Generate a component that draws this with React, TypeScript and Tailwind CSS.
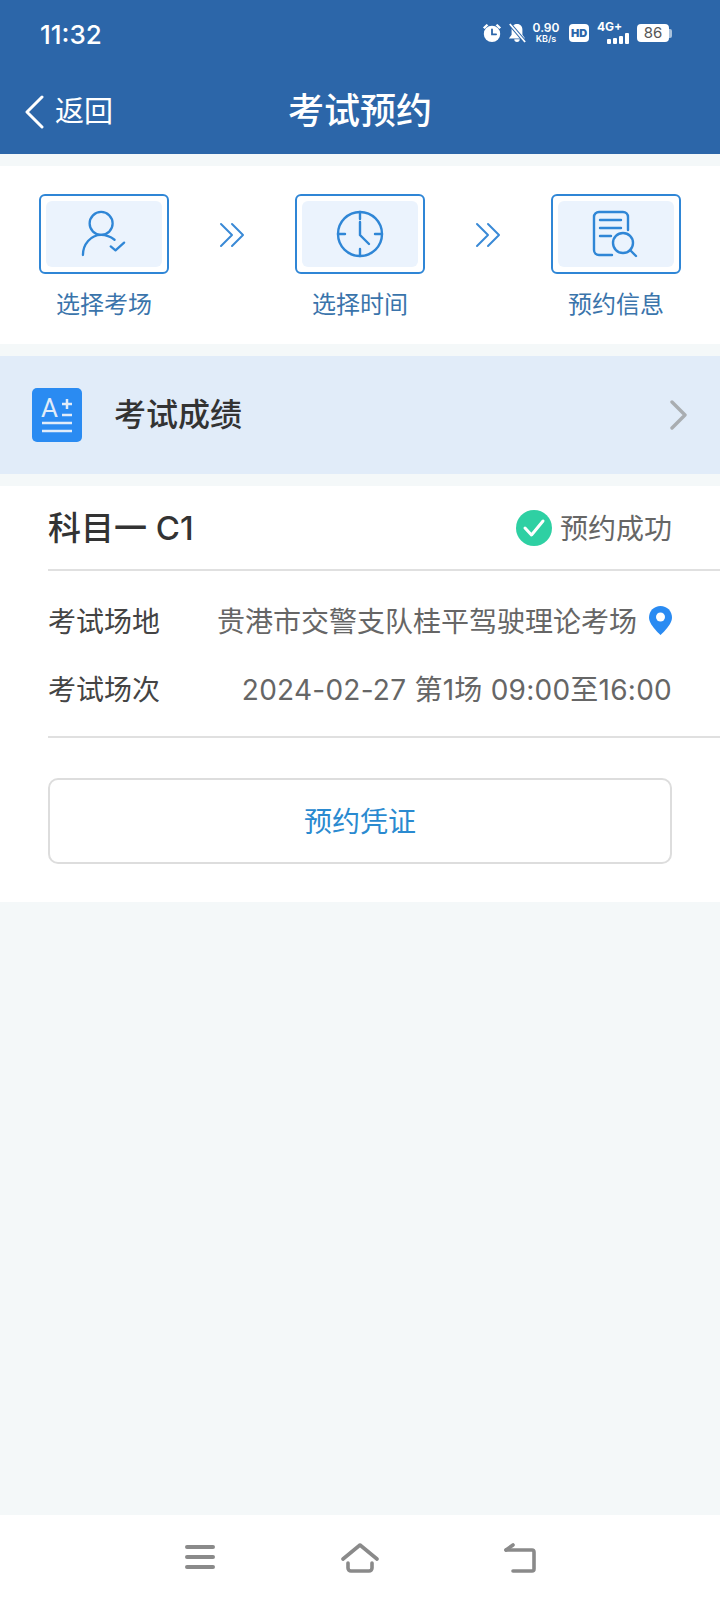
import type { ReactNode } from 'react';

const font = { fontFamily: 'Inter, "Noto Sans CJK SC", sans-serif' };

function UserIcon() {
  return (
    <svg width="46" height="48" viewBox="0 0 48 48" fill="none" stroke="#2f86d6" strokeWidth="2.4" strokeLinecap="round" strokeLinejoin="round">
      <circle cx="21" cy="13" r="12" />
      <path d="M2 46c0-11 8-21 19-21 5 0 10 2 14 5" />
      <path d="M31 37l5 4 9-8" />
    </svg>
  );
}

function ClockIcon() {
  return (
    <svg width="48" height="48" viewBox="0 0 48 48" fill="none" stroke="#2f86d6" strokeWidth="2.4" strokeLinecap="round">
      <circle cx="24" cy="24" r="22" />
      <path d="M24 2v7M24 39v7M2 24h7M39 24h7" />
      <path d="M24 12v13l9 9" />
    </svg>
  );
}

function DocIcon() {
  return (
    <svg width="48" height="48" viewBox="0 0 48 48" fill="none" stroke="#2f86d6" strokeWidth="2.4" strokeLinecap="round">
      <path d="M20 45H7a5 5 0 0 1-5-5V7a5 5 0 0 1 5-5h24a5 5 0 0 1 5 5v13" />
      <path d="M8 10h21M8 18h21M8 26h11" />
      <circle cx="31" cy="33" r="10" />
      <path d="M38 40l6 6" />
    </svg>
  );
}

function Step({ label, children }: { label: string; children: ReactNode }) {
  return (
    <div className="w-[130px] flex flex-col items-center">
      <div className="w-[130px] h-[80px] border-2 border-[#2f86d6] rounded-[6px] p-[5px] bg-white">
        <div className="w-full h-full rounded-[6px] bg-[#ebf3fd] flex items-center justify-center">{children}</div>
      </div>
      <span className="mt-[13px] text-[24px] leading-[36px] text-[#3a74ab]">{label}</span>
    </div>
  );
}

function Chevrons() {
  return (
    <svg className="mt-[28px]" width="26" height="26" viewBox="0 0 26 26" fill="none" stroke="#3a8ad6" strokeWidth="2" strokeLinecap="round" strokeLinejoin="round">
      <path d="M2 2l11 11L2 24" />
      <path d="M13 2l11 11-11 11" />
    </svg>
  );
}

export default function App() {
  return (
    <div className="w-[720px] h-[1600px] bg-[#f4f8f9] flex flex-col" style={font}>
      {/* header */}
      <div className="h-[154px] shrink-0 bg-[#2c66a9] text-white">
        <div className="h-[68px] flex items-center pl-[40px] pr-[48px] justify-between">
          <span className="text-[26px] font-medium">11:32</span>
          <div className="flex items-center gap-[6px] -mt-[2px]">
            <svg width="20" height="20" viewBox="0 0 22 22" fill="white">
              <circle cx="11" cy="12" r="9" />
              <path d="M1 5l4-4 2 1.5-4 4zM21 5l-4-4-2 1.5 4 4z" />
              <path d="M11 7v5.5h4.5" fill="none" stroke="#2c66a9" strokeWidth="2" strokeLinecap="round" />
            </svg>
            <svg width="18" height="20" viewBox="0 0 20 22" fill="white">
              <path d="M10 1c4 0 6 3 6 6v6l3 4H1l3-4V7c0-3 2-6 6-6z" />
              <path d="M7 18a3 3 0 0 0 6 0z" />
              <path d="M2 1l17 20" stroke="#2c66a9" strokeWidth="4" />
              <path d="M2 1l17 20" stroke="white" strokeWidth="2" />
            </svg>
            <div className="flex flex-col items-center w-[28px] font-semibold leading-none">
              <span className="text-[12px] leading-[12px]">0.90</span>
              <span className="text-[9px] leading-[10px]">KB/s</span>
            </div>
            <span className="ml-[3px] w-[20px] h-[18px] rounded-[4px] bg-white text-[#2c66a9] text-[11px] font-black leading-[18px] text-center">HD</span>
            <div className="relative w-[32px] h-[22px] ml-[2px]">
              <span className="absolute left-0 top-[-2px] text-[12px] font-bold leading-[14px]">4G+</span>
              <div className="absolute right-0 bottom-0 flex items-end gap-[2px]">
                <i className="block w-[4px] h-[5px] bg-white rounded-[1px]" />
                <i className="block w-[4px] h-[6px] bg-white rounded-[1px]" />
                <i className="block w-[4px] h-[8px] bg-white rounded-[1px]" />
                <i className="block w-[4px] h-[11px] bg-white rounded-[1px]" />
              </div>
            </div>
            <div className="flex items-center ml-[2px]">
              <span className="w-[32px] h-[18px] rounded-[4px] bg-white text-[#555] text-[15px] leading-[18px] text-center">86</span>
              <i className="block w-[3px] h-[9px] bg-white/60 rounded-r-[2px]" />
            </div>
          </div>
        </div>
        <div className="relative h-[86px] flex items-center justify-center">
          <span className="text-[36px] font-medium">考试预约</span>
          <div className="absolute left-[24px] top-[21px] flex items-center gap-[11px]">
            <svg width="20" height="34" viewBox="0 0 20 34" fill="none" stroke="white" strokeWidth="3" strokeLinecap="round" strokeLinejoin="round">
              <path d="M18 2L3 17l15 15" />
            </svg>
            <span className="text-[29px] leading-[44px] pt-[1px]">返回</span>
          </div>
        </div>
      </div>

      {/* steps */}
      <div className="mt-[12px] h-[178px] bg-white px-[39px] pt-[28px] flex items-start justify-between">
        <Step label="选择考场"><UserIcon /></Step>
        <Chevrons />
        <Step label="选择时间"><ClockIcon /></Step>
        <Chevrons />
        <Step label="预约信息"><DocIcon /></Step>
      </div>

      {/* score row */}
      <div className="mt-[12px] h-[118px] bg-[#e1ecf9] flex items-center pl-[32px] pr-[32px]">
        <svg width="50" height="54" viewBox="0 0 50 54">
          <rect width="50" height="54" rx="5" fill="#2a8bf2" />
          <text x="9" y="29" fontSize="26" fill="#e1ecf9" fontFamily="Roboto, sans-serif">A</text>
          <path d="M30 16h10M35 11v10M30 27h10M10 35h30M10 43h30" stroke="#e1ecf9" strokeWidth="2.5" />
        </svg>
        <span className="ml-[32px] text-[32px] font-medium text-[#333]">考试成绩</span>
        <svg className="ml-auto" width="18" height="30" viewBox="0 0 18 30" fill="none" stroke="#a9adb1" strokeWidth="3.4" strokeLinecap="round" strokeLinejoin="round">
          <path d="M2 2l13 13L2 28" />
        </svg>
      </div>

      {/* exam card */}
      <div className="mt-[12px] h-[416px] bg-white pl-[48px]">
        <div className="h-[85px] pt-[3px] flex items-center justify-between pr-[48px] border-b-2 border-[#e0e0e0]">
          <span className="text-[33px] font-medium text-[#333]">科目一 C1</span>
          <div className="flex items-center gap-[8px]">
            <svg className="-mt-[2px]" width="36" height="36" viewBox="0 0 36 36">
              <circle cx="18" cy="18" r="18" fill="#2ed0a3" />
              <path d="M9 18l6.5 7L27 11" fill="none" stroke="white" strokeWidth="3" strokeLinecap="round" strokeLinejoin="round" />
            </svg>
            <span className="text-[28px] text-[#666]">预约成功</span>
          </div>
        </div>
        <div className="h-[167px] pt-[17px] pr-[48px] border-b-2 border-[#e0e0e0] text-[28px] text-[#666]">
          <div className="h-[68px] flex items-center justify-between">
            <span className="text-[#444]">考试场地</span>
            <div className="flex items-center gap-[12px]">
              <span>贵港市交警支队桂平驾驶理论考场</span>
              <svg className="-mt-[4px]" width="23" height="29" viewBox="0 0 23 29">
                <path d="M11.5 0C5 0 0 5 0 11.5 0 19 11.5 29 11.5 29S23 19 23 11.5C23 5 18 0 11.5 0z" fill="#2a8bf2" />
                <circle cx="11.5" cy="11" r="4.5" fill="white" />
              </svg>
            </div>
          </div>
          <div className="h-[68px] flex items-center justify-between">
            <span className="text-[#444]">考试场次</span>
            <span className="tracking-[0.25px]">2024-02-27 第1场 09:00至16:00</span>
          </div>
        </div>
        <div className="pt-[40px] pr-[48px]">
          <div className="h-[86px] pt-[2px] border-2 border-[#dddddd] rounded-[10px] flex items-center justify-center text-[28px] text-[#2a8ad0]">预约凭证</div>
        </div>
      </div>

      <div className="flex-1" />

      {/* nav bar */}
      <div className="h-[85px] bg-white flex items-start justify-center pt-[29px]">
        <svg width="30" height="26" viewBox="0 0 30 26" fill="none" stroke="#8a8a8a" strokeWidth="4" strokeLinecap="round">
          <path d="M2 3h26M2 13h26M2 23h26" />
        </svg>
        <svg className="ml-[126px] -mt-[1px]" width="38" height="30" viewBox="0 0 38 30" fill="none" stroke="#8a8a8a" strokeWidth="3.6" strokeLinecap="round" strokeLinejoin="round">
          <path d="M2 16L19 2l17 14" />
          <path d="M7 20v5a3 3 0 0 0 3 3h18a3 3 0 0 0 3-3v-5" />
        </svg>
        <svg className="ml-[125px] -mt-[1px]" width="32" height="30" viewBox="0 0 32 30" fill="none" stroke="#8a8a8a" strokeWidth="3.6" strokeLinecap="round" strokeLinejoin="round">
          <path d="M2 7h26a2 2 0 0 1 2 2v17a2 2 0 0 1-2 2H9" />
          <path d="M9 2L2 7" />
        </svg>
      </div>
    </div>
  );
}
